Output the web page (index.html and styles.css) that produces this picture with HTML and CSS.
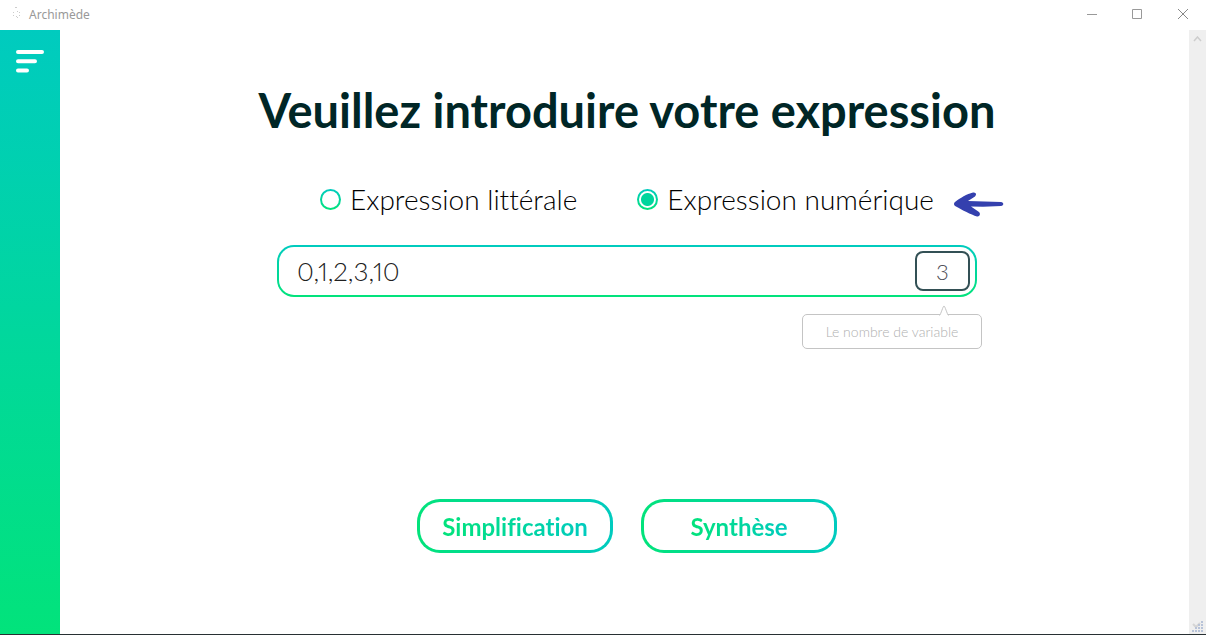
FILE: index.html
```html
<!DOCTYPE html>
<html lang="fr">
<head>
<meta charset="utf-8">
<title>Archimède</title>
<link rel="stylesheet" href="styles.css">
</head>
<body>
<div class="window">
  <header class="titlebar">
    <svg class="app-icon" width="16" height="16" viewBox="0 0 16 16" fill="#aaa" aria-hidden="true">
      <path d="M7 0h2v1H7zM5 5h1v1H5zM9 4h1v1H9zM11 5h1v1h-1zM5 8h1v1H5zM8 9h1v1H8zM11 8h1v1h-1zM9 10h1v1H9z" opacity=".6"/>
    </svg>
    <span class="app-name">Archimède</span>
    <button class="win-button" aria-label="Réduire"><svg width="12" height="12" viewBox="0 0 12 12"><path d="M2 5.500h10" stroke="#999" fill="none"/></svg></button>
    <button class="win-button" aria-label="Agrandir"><svg width="12" height="12" viewBox="0 0 12 12"><path d="M1.500.5h9v9h-9z" stroke="#999" fill="none"/></svg></button>
    <button class="win-button" aria-label="Fermer"><svg width="12" height="12" viewBox="0 0 12 12"><path d="M1 0l10 10M11 0L1 10" stroke="#888" fill="none"/></svg></button>
  </header>
  <div class="content">
    <nav class="sidebar">
      <button class="menu" aria-label="Menu">
        <svg width="28" height="24" viewBox="0 0 28 24" fill="none" stroke="#fff" stroke-width="4" stroke-linecap="round"><path d="M2 2h24M2 11.300h17M2 20.600h9"/></svg>
      </button>
    </nav>
    <main class="main">
      <h1 class="title">Veuillez introduire votre expression</h1>
      <div class="choices">
        <label class="choice"><input class="radio" type="radio" name="kind">Expression littérale</label>
        <label class="choice"><input class="radio" type="radio" name="kind" checked>Expression numérique</label>
        <svg class="arrow" width="50" height="26" viewBox="0 0 50 26" aria-hidden="true"><path d="M1 10C6 6 13 2 19 .5c3-.5 4 2 2 4L14 9l33 1c3 .4 3 3.600 0 4L29 14.800 17 14.500l8 5.500c2 2 .5 5-2 4.500C17 22.500 8 18 2 14.500-.5 13-.5 11.500 1 10z" fill="#3440ae"/></svg>
      </div>
      <div class="field">
        <input class="expression" type="text" value="0,1,2,3,10" aria-label="Expression">
        <input class="count" type="text" value="3" aria-label="Le nombre de variable" aria-describedby="hint">
        <div class="hint" id="hint" role="tooltip">Le nombre de variable
          <svg class="hint-tip" width="10" height="11" viewBox="0 0 10 11" aria-hidden="true"><path d="M.5 10.500C2 9 4 1 5 1s3 8 4.500 9.500" fill="#fff" stroke="#c4c4c4"/></svg>
        </div>
      </div>
      <div class="actions">
        <button class="action"><span class="action-text">Simplification</span></button>
        <button class="action"><span class="action-text">Synthèse</span></button>
      </div>
    </main>
    <div class="scrollbar" aria-hidden="true">
      <svg width="9" height="6" viewBox="0 0 9 6" fill="none" stroke="#cdcdcd" stroke-width="1.500"><path d="M1 5l3.500-4L8 5"/></svg>
      <svg width="12" height="12" viewBox="0 0 12 12"><path d="M1 3l3 3 4-4" fill="none" stroke="#d5d5d5" stroke-width="2"/><path d="M9 0h2v2H9zM6 3h2v2H6zM9 3h2v2H9zM3 6h2v2H3zM6 6h2v2H6zM9 6h2v2H9zM0 9h2v2H0zM3 9h2v2H3zM6 9h2v2H6zM9 9h2v2H9z" fill="#b8c3d8"/></svg>
    </div>
  </div>
</div>
</body>
</html>
```
FILE: styles.css
```css
* { box-sizing: border-box; }

body {
  margin: 0;
  background: #fff;
  font-family: Lato, "Open Sans", sans-serif;
  font-variant-ligatures: none;
}

button {
  padding: 0;
  border: 0;
  background: none;
  font-family: inherit;
}

svg { display: block; }

.window {
  display: flex;
  flex-direction: column;
  min-height: calc(100vh - 1px);
  border-bottom: 1px solid #283033;
}

.titlebar {
  display: flex;
  align-items: center;
  height: 30px;
  padding-left: 8px;
}

.app-name {
  flex: 1;
  margin-left: 5px;
  color: #999;
  font: 12px/16px "Noto Sans", sans-serif;
}

.win-button {
  display: grid;
  place-items: center;
  width: 46px;
  height: 28px;
}

.content {
  display: flex;
  flex: 1;
}

.sidebar {
  width: 60px;
  padding: 20px 16px;
  background: linear-gradient(#00cbbf, #02e37b);
}

.main {
  display: flex;
  flex: 1;
  flex-direction: column;
  align-items: center;
  padding: 50px 0 80px 5px;
}

.title {
  margin: 0;
  color: #002626;
  font-size: 47px;
  font-weight: 700;
  line-height: 60px;
}

.choices {
  display: flex;
  position: relative;
  gap: 60px;
  margin-top: 41px;
}

.choice {
  display: flex;
  align-items: center;
  gap: 9px;
  color: #000;
  font-size: 28px;
  font-weight: 300;
  line-height: 36px;
}

.radio {
  width: 21px;
  height: 21px;
  margin: 0;
  border: 2px solid transparent;
  border-radius: 50%;
  appearance: none;
  background: linear-gradient(#fff, #fff) padding-box, linear-gradient(#00cbbf, #02e37b) border-box;
}

.radio:checked {
  background: radial-gradient(circle, #00d59d 6px, #fff 7px) padding-box, linear-gradient(#00cbbf, #02e37b) border-box;
}

.arrow {
  position: absolute;
  top: 11px;
  left: calc(100% + 20px);
}

.field {
  display: flex;
  position: relative;
  align-items: center;
  width: 100%;
  max-width: 700px;
  height: 52px;
  margin-top: 28px;
  padding: 0 5px 0 18px;
  border: 2px solid transparent;
  border-radius: 17px;
  background: linear-gradient(#fff, #fff) padding-box, linear-gradient(#00cbbf, #02e37b) border-box;
}

.expression {
  flex: 1;
  min-width: 0;
  padding: 0;
  border: 0;
  outline: 0;
  background: none;
  color: #202020;
  font-family: inherit;
  font-size: 26px;
  font-variant-numeric: proportional-nums;
  font-weight: 300;
}

.count {
  width: 55px;
  height: 40px;
  padding: 0;
  border: 2px solid #335055;
  border-radius: 8px;
  background: #fff;
  color: #505058;
  font-family: inherit;
  font-size: 22px;
  font-weight: 300;
  text-align: center;
}

.hint {
  position: absolute;
  top: calc(100% + 19px);
  right: -7px;
  width: 180px;
  border: 1px solid #c4c4c4;
  border-radius: 5px;
  background: #fff;
  color: #b0b0b0;
  font-size: 14px;
  font-weight: 300;
  line-height: 33px;
  text-align: center;
}

.hint-tip {
  position: absolute;
  right: 32px;
  bottom: calc(100% - 1px);
}

.actions {
  display: flex;
  gap: 28px;
  margin-top: 202px;
}

.action {
  width: 196px;
  height: 54px;
  border: 3px solid transparent;
  border-radius: 23px;
  background: linear-gradient(#fff, #fff) padding-box, linear-gradient(90deg, #02e37b, #00cbbf) border-box;
  font-size: 24px;
  font-variant-ligatures: none;
  font-weight: 700;
}

.action-text {
  background: linear-gradient(90deg, #02e37b, #00cbbf);
  background-clip: text;
  color: transparent;
}

.scrollbar {
  display: flex;
  flex-direction: column;
  align-items: center;
  justify-content: space-between;
  width: 17px;
  padding: 6px 0 1px;
  background: #efefef;
}
```
